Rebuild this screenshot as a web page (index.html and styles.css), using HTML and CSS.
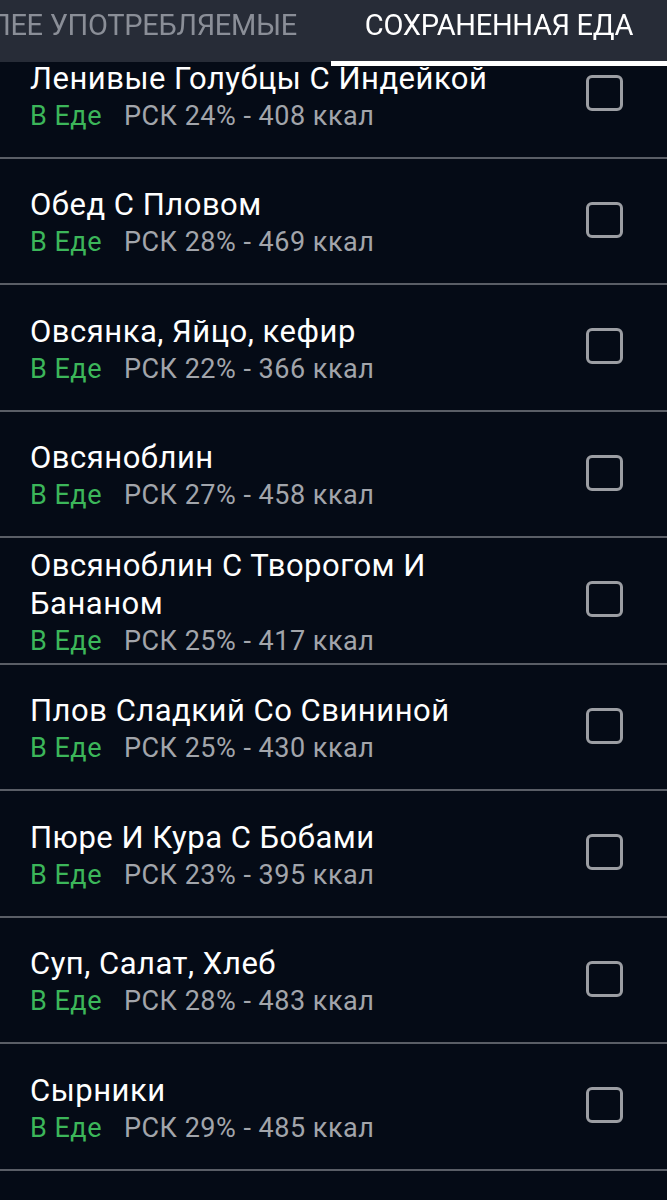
FILE: index.html
```html
<!DOCTYPE html>
<html lang="ru">
<head>
    <meta charset="UTF-8">
    <meta name="viewport" content="width=device-width, initial-scale=1.0">
    <title>Сохраненная еда</title>
    <link rel="stylesheet" href="styles.css">
</head>
<body>
    <header class="tab-bar">
        <nav class="tabs">
            <a class="tab">БОЛЕЕ УПОТРЕБЛЯЕМЫЕ</a>
            <a class="tab active">СОХРАНЕННАЯ ЕДА</a>
        </nav>
    </header>

    <main class="food-list">
        <div class="food-row">
            <div class="food-info">
                <div class="food-name">Ленивые Голубцы С Индейкой</div>
                <div class="food-meta"><span class="tag">В Еде</span><span class="stats">РСК 24% - 408 ккал</span></div>
            </div>
            <span class="check"></span>
        </div>
        <div class="food-row">
            <div class="food-info">
                <div class="food-name">Обед С Пловом</div>
                <div class="food-meta"><span class="tag">В Еде</span><span class="stats">РСК 28% - 469 ккал</span></div>
            </div>
            <span class="check"></span>
        </div>
        <div class="food-row">
            <div class="food-info">
                <div class="food-name">Овсянка, Яйцо, кефир</div>
                <div class="food-meta"><span class="tag">В Еде</span><span class="stats">РСК 22% - 366 ккал</span></div>
            </div>
            <span class="check"></span>
        </div>
        <div class="food-row">
            <div class="food-info">
                <div class="food-name">Овсяноблин</div>
                <div class="food-meta"><span class="tag">В Еде</span><span class="stats">РСК 27% - 458 ккал</span></div>
            </div>
            <span class="check"></span>
        </div>
        <div class="food-row">
            <div class="food-info">
                <div class="food-name">Овсяноблин С Творогом И Бананом</div>
                <div class="food-meta"><span class="tag">В Еде</span><span class="stats">РСК 25% - 417 ккал</span></div>
            </div>
            <span class="check"></span>
        </div>
        <div class="food-row">
            <div class="food-info">
                <div class="food-name">Плов Сладкий Со Свининой</div>
                <div class="food-meta"><span class="tag">В Еде</span><span class="stats">РСК 25% - 430 ккал</span></div>
            </div>
            <span class="check"></span>
        </div>
        <div class="food-row">
            <div class="food-info">
                <div class="food-name">Пюре И Кура С Бобами</div>
                <div class="food-meta"><span class="tag">В Еде</span><span class="stats">РСК 23% - 395 ккал</span></div>
            </div>
            <span class="check"></span>
        </div>
        <div class="food-row">
            <div class="food-info">
                <div class="food-name">Суп, Салат, Хлеб</div>
                <div class="food-meta"><span class="tag">В Еде</span><span class="stats">РСК 28% - 483 ккал</span></div>
            </div>
            <span class="check"></span>
        </div>
        <div class="food-row">
            <div class="food-info">
                <div class="food-name">Сырники</div>
                <div class="food-meta"><span class="tag">В Еде</span><span class="stats">РСК 29% - 485 ккал</span></div>
            </div>
            <span class="check"></span>
        </div>
    </main>
</body>
</html>
```

FILE: styles.css
```css
body { margin: 0; padding: 0; font-family: Roboto, 'Noto Sans', sans-serif; background-color: #050b16; color: #fff; height: 1200px; overflow: hidden; }

/* tab bar lies over the scrolled list */
.tab-bar { position: fixed; top: 0; left: 0; right: 0; z-index: 2; height: 62px; background-color: #272c37; }
.tabs { display: flex; justify-content: flex-end; height: 100%; }
.tab { flex: none; display: flex; align-items: center; justify-content: center; box-sizing: border-box; height: 100%; padding: 0 34px 12px; font-size: 29px; color: #8a8e97; letter-spacing: -0.3px; position: relative; }
.tab.active { width: 336px; padding: 0 0 12px; color: #fff; }
.tab.active::after { content: ''; position: absolute; left: 0; right: 0; bottom: -4px; height: 5px; background-color: #fff; }

.food-list { margin-top: 32px; }
.food-row { display: flex; align-items: center; box-sizing: border-box; height: 126.5px; padding: 5px 44px 0 30px; border-bottom: 2px solid #5a5e66; }
.food-info { flex: 1; }
.food-name { font-size: 31px; line-height: 38px; color: #fff; padding-right: 40px; letter-spacing: 0.5px; }
.food-meta { font-size: 27px; line-height: 36px; letter-spacing: 0.5px; }
.food-meta .tag { color: #3cb65a; margin-right: 22px; }
.food-meta .stats { color: #a2a5ab; }
.check { flex: none; width: 31px; height: 30px; border: 3px solid #9c9ea3; border-radius: 6px; margin-top: -7px; }
```
